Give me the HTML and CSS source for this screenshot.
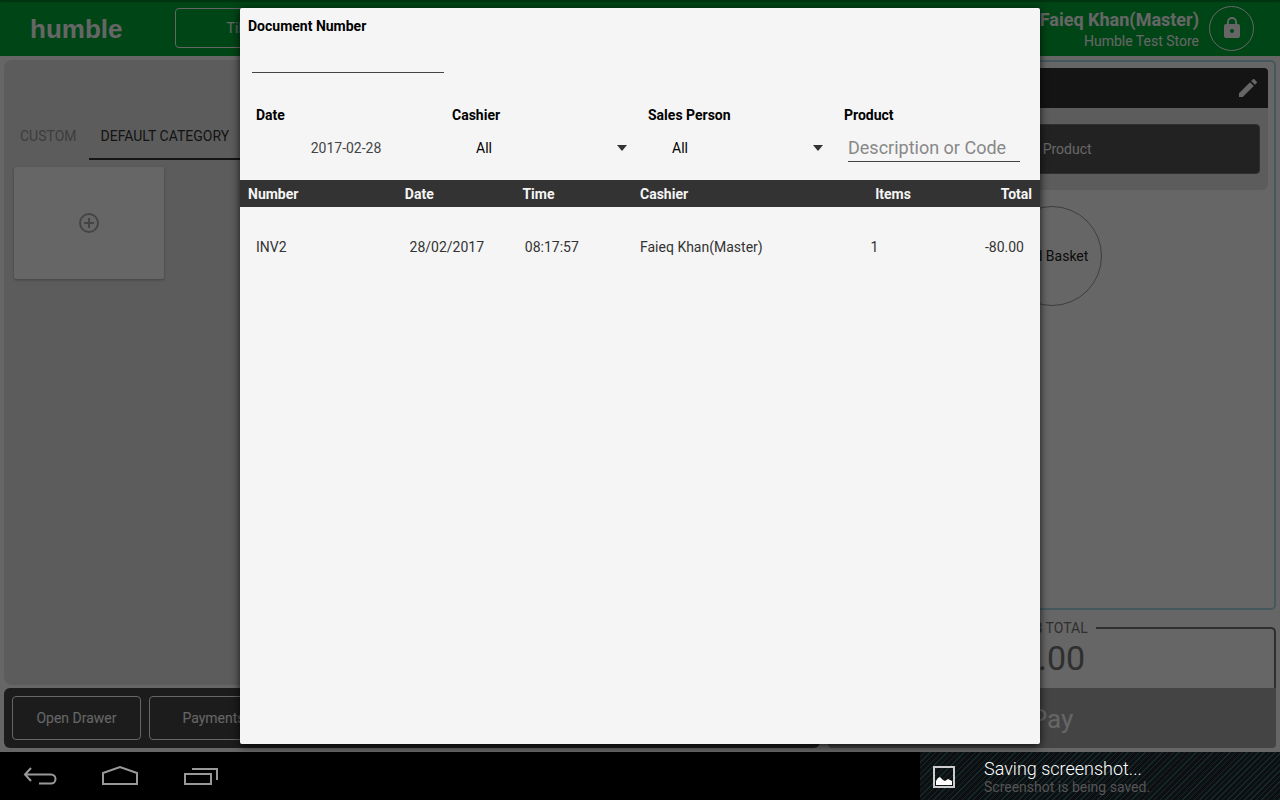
FILE: index.html
```html
<!DOCTYPE html>
<html lang="en">
<head>
<meta charset="utf-8">
<meta name="viewport" content="width=device-width, initial-scale=1">
<title>Humble Point of Sale</title>
<link rel="stylesheet" href="styles.css">
</head>
<body>
<div class="app">
  <header class="topbar">
    <div class="logo">humble</div>
    <button class="outline-btn till" type="button">Tills</button>
    <div class="user">
      <div class="user-name">Faieq Khan(Master)</div>
      <div class="user-store">Humble Test Store</div>
    </div>
    <button class="lock" type="button" aria-label="Lock">
      <svg viewBox="0 0 24 24" width="24" height="24"><path fill="#fff" fill-rule="evenodd" d="M18 8h-1V6A5 5 0 0 0 7 6v2H6a2 2 0 0 0-2 2v10c0 1.100.9 2 2 2h12a2 2 0 0 0 2-2V10a2 2 0 0 0-2-2zM12 17a2 2 0 1 1 0-4 2 2 0 0 1 0 4zM15.100 8H8.900V6a3.100 3.100 0 0 1 6.200 0z"/></svg>
    </button>
  </header>

  <main class="workspace">
    <section class="left">
      <div class="catalog">
        <nav class="tabs">
          <button class="tab" type="button">CUSTOM</button>
          <button class="tab active" type="button">DEFAULT CATEGORY</button>
        </nav>
        <button class="tile" type="button" aria-label="Add item">
          <svg viewBox="0 0 24 24" width="24" height="24" fill="none" stroke="#aaa" stroke-width="2"><circle cx="12" cy="12" r="9"/><path d="M12 7v10M7 12h10"/></svg>
        </button>
      </div>
      <div class="actions">
        <button class="outline-btn" type="button">Open Drawer</button>
        <button class="outline-btn" type="button">Payments</button>
      </div>
    </section>

    <section class="right">
      <div class="cart">
        <div class="cart-head">
          <button class="edit" type="button" aria-label="Edit">
            <svg viewBox="0 0 24 24" width="24" height="24"><path fill="#fff" d="M3 17.250V21h3.750L17.810 9.940l-3.750-3.750zM20.710 7.040a1 1 0 0 0 0-1.410l-2.340-2.340a1 1 0 0 0-1.410 0l-1.830 1.830 3.750 3.750z"/></svg>
          </button>
        </div>
        <div class="cart-search"><button class="find" type="button">Find Product</button></div>
        <button class="load" type="button">Find Basket</button>
      </div>
      <fieldset class="subtotal">
        <legend>SUB TOTAL</legend>
        <div class="amount">0.00</div>
      </fieldset>
      <button class="pay" type="button">Pay</button>
    </section>
  </main>

  <div class="scrim"></div>

  <div class="dialog" role="dialog" aria-label="Documents">
    <div class="doc">
      <label for="doc">Document Number</label>
      <input id="doc" class="line-input" type="text">
    </div>
    <div class="filters">
      <div class="filter">
        <label for="date">Date</label>
        <input id="date" class="date" type="text" value="2017-02-28">
      </div>
      <div class="filter">
        <label for="cashier">Cashier</label>
        <div class="select"><select id="cashier"><option>All</option></select></div>
      </div>
      <div class="filter">
        <label for="person">Sales Person</label>
        <div class="select"><select id="person"><option>All</option></select></div>
      </div>
      <div class="filter">
        <label for="product">Product</label>
        <input id="product" class="line-input product" type="text" placeholder="Description or Code">
      </div>
    </div>
    <table class="docs">
      <thead>
        <tr><th>Number</th><th>Date</th><th>Time</th><th>Cashier</th><th>Items</th><th class="num">Total</th></tr>
      </thead>
      <tbody>
        <tr><td>INV2</td><td>28/02/2017</td><td>08:17:57</td><td>Faieq Khan(Master)</td><td>1</td><td class="num">-80.00</td></tr>
      </tbody>
    </table>
  </div>
</div>

<footer class="sysbar">
  <nav class="sysnav">
    <button type="button" aria-label="Back"><svg viewBox="0 0 40 24" width="40" height="24"><path d="M11 3L5 9.500 11 16M5 9.500h26a4.500 4.500 0 0 1 0 9H19"/></svg></button>
    <button type="button" aria-label="Home"><svg viewBox="0 0 40 24" width="40" height="24"><path d="M3 19V8l17-6 17 6v11z"/></svg></button>
    <button type="button" aria-label="Recent apps"><svg viewBox="0 0 40 24" width="40" height="24"><path d="M5 9h26v10H5zM12 4h25v11"/></svg></button>
  </nav>
  <div class="notice" role="status">
    <svg viewBox="0 0 22 22" width="22" height="22"><path fill="none" stroke="#ccc" stroke-width="2" d="M1 1h20v20H1z"/><path fill="#fff" d="M3 19v-4l2-3 2-1 3 3 2 1 3-2 4 2v4z"/></svg>
    <div>
      <div class="notice-title">Saving screenshot...</div>
      <div class="notice-text">Screenshot is being saved.</div>
    </div>
  </div>
</footer>
</body>
</html>
```
FILE: styles.css
```css
* { box-sizing: border-box; }
body {
  margin: 0;
  height: 100vh;
  display: flex;
  flex-direction: column;
  overflow: hidden;
  font: 14px/16px Roboto, "Liberation Sans", sans-serif;
  background: #000;
}
button, input, select {
  font: inherit;
  color: inherit;
  background: none;
  border: 0;
  padding: 0;
  margin: 0;
  border-radius: 0;
  outline: 0;
}
svg { display: block; }

.app {
  position: relative;
  flex: 1;
  min-height: 0;
  display: flex;
  flex-direction: column;
  background: #fff;
}
.topbar {
  height: 56px;
  flex: none;
  display: flex;
  align-items: center;
  padding: 0 26px 0 30px;
  background: #00ac38;
  box-shadow: inset 0 2px 1px #00802a;
  color: #fff;
}
.logo {
  width: 145px;
  padding-top: 2px;
  font: bold 26px/32px "Liberation Sans", sans-serif;
}
.outline-btn {
  border: 1px solid #fff;
  border-radius: 4px;
  color: #fff;
  width: 129px;
  height: 44px;
}
.till { height: 40px; }
.user { margin-left: auto; padding-top: 4px; text-align: right; }
.user-name { font-weight: bold; font-size: 18px; line-height: 22px; }
.user-store { line-height: 20px; }
.lock {
  width: 45px;
  height: 45px;
  margin-left: 10px;
  border: 1px solid #fff;
  border-radius: 50%;
  display: grid;
  place-items: center;
}

.workspace {
  flex: 1;
  min-height: 0;
  display: flex;
  gap: 8px;
  padding: 4px;
}
.left { flex: 816; display: flex; flex-direction: column; gap: 3px; }
.catalog {
  flex: 1;
  background: #e6e6e6;
  border-radius: 8px;
  padding: 52px 4px 0;
}
.tabs { display: flex; }
.tab {
  height: 48px;
  padding: 2px 12px 0;
  color: #999;
  border-bottom: 2px solid transparent;
}
.tab.active { color: #333; border-color: #333; }
.tile {
  display: grid;
  place-items: center;
  width: 150px;
  height: 112px;
  margin: 7px 6px;
  background: #fff;
  border-radius: 2px;
  box-shadow: 0 1px 3px rgba(0, 0, 0, .3);
}
.actions {
  display: flex;
  gap: 8px;
  padding: 8px;
  background: #464646;
  border-radius: 6px;
}

.right { flex: 448; display: flex; flex-direction: column; }
.cart {
  flex: 1;
  border: 2px solid #aadbea;
  border-radius: 5px;
  padding: 6px;
}
.cart-head {
  height: 40px;
  display: flex;
  align-items: center;
  justify-content: flex-end;
  padding: 0 8px;
  background: #333;
  border-radius: 4px 4px 0 0;
}
.cart-search {
  padding: 16px 8px;
  background: #e6e6e6;
  border-radius: 0 0 6px 6px;
}
.find {
  display: block;
  width: 100%;
  height: 50px;
  background: #555;
  border: 1px solid #777;
  border-radius: 4px;
  color: #fff;
}
.load {
  display: block;
  width: 100px;
  height: 100px;
  margin: 16px auto;
  border: 1px solid #999;
  border-radius: 50%;
  color: #222;
}
.subtotal {
  margin: 10px 0 0;
  padding: 0 0 8px;
  min-width: 0;
  border: 2px solid #777;
  border-bottom: 0;
  border-radius: 5px 5px 0 0;
  text-align: center;
  color: #777;
}
.subtotal legend { margin: 0 auto; padding: 0 8px; }
.amount { font-size: 34px; line-height: 44px; }
.pay {
  height: 60px;
  padding-top: 2px;
  background: #aaa;
  color: #fff;
  border-radius: 0 0 4px 4px;
  font-size: 26px;
}

.scrim {
  position: absolute;
  inset: 0;
  background: rgba(0, 0, 0, .6);
}
.dialog {
  position: absolute;
  inset: 8px 18.75%;
  background: #f5f5f5;
  border-radius: 2px;
  box-shadow: 0 2px 8px rgba(0, 0, 0, .8);
  color: #000;
}
.dialog label { display: block; font-weight: bold; line-height: 20px; }
.doc { padding: 8px 8px 0; }
.line-input {
  display: block;
  border-bottom: 1px solid #444;
}
.doc .line-input { width: 192px; height: 37px; margin-left: 4px; }
.filters {
  display: grid;
  grid-template-columns: repeat(4, 1fr);
  padding: 32px 8px 14px;
}
.filter { padding: 0 8px; }
.date {
  width: 100%;
  height: 36px;
  margin-top: 5px;
  text-align: center;
  color: #444;
}
.select { position: relative; margin-top: 5px; }
.select select {
  appearance: none;
  width: 100%;
  height: 36px;
  padding-left: 24px;
}
.select::after {
  content: "";
  position: absolute;
  right: 5px;
  top: 15px;
  border: 5px solid transparent;
  border-top: 6px solid #333;
  border-bottom: 0;
  pointer-events: none;
}
.product {
  width: calc(100% - 8px);
  height: 32px;
  margin: 5px 4px 0;
  padding-top: 3px;
  font-size: 18px;
}
.product::placeholder { color: #888; opacity: 1; }

.docs, .docs thead, .docs tbody { display: block; }
.docs tr {
  display: grid;
  grid-template-columns: 4fr 3fr 3fr 6fr 2fr 2fr;
}
.docs th, .docs td { padding: 0; text-align: left; }
.docs .num { text-align: right; }
.docs thead tr {
  padding: 1px 8px 0;
  background: #333;
  color: #f5f5f5;
  line-height: 26px;
}
.docs tbody tr { padding: 30px 16px; line-height: 20px; color: #333; }

.sysbar {
  height: 48px;
  flex: none;
  display: flex;
  justify-content: space-between;
}
.sysnav { display: flex; padding-top: 2px; }
.sysnav button { width: 80px; display: grid; place-items: center; }
.sysnav path { fill: none; stroke: #999; stroke-width: 2; }
.notice {
  width: 28.125%;
  display: flex;
  align-items: center;
  gap: 29px;
  padding: 1px 0 0 13px;
  background: repeating-linear-gradient(135deg, #0e0f11 0 3px, #12292e 3px 4px);
}
.notice-title { color: #fff; font-size: 18px; line-height: 20px; font-weight: 300; }
.notice-text { color: #555; }
```
